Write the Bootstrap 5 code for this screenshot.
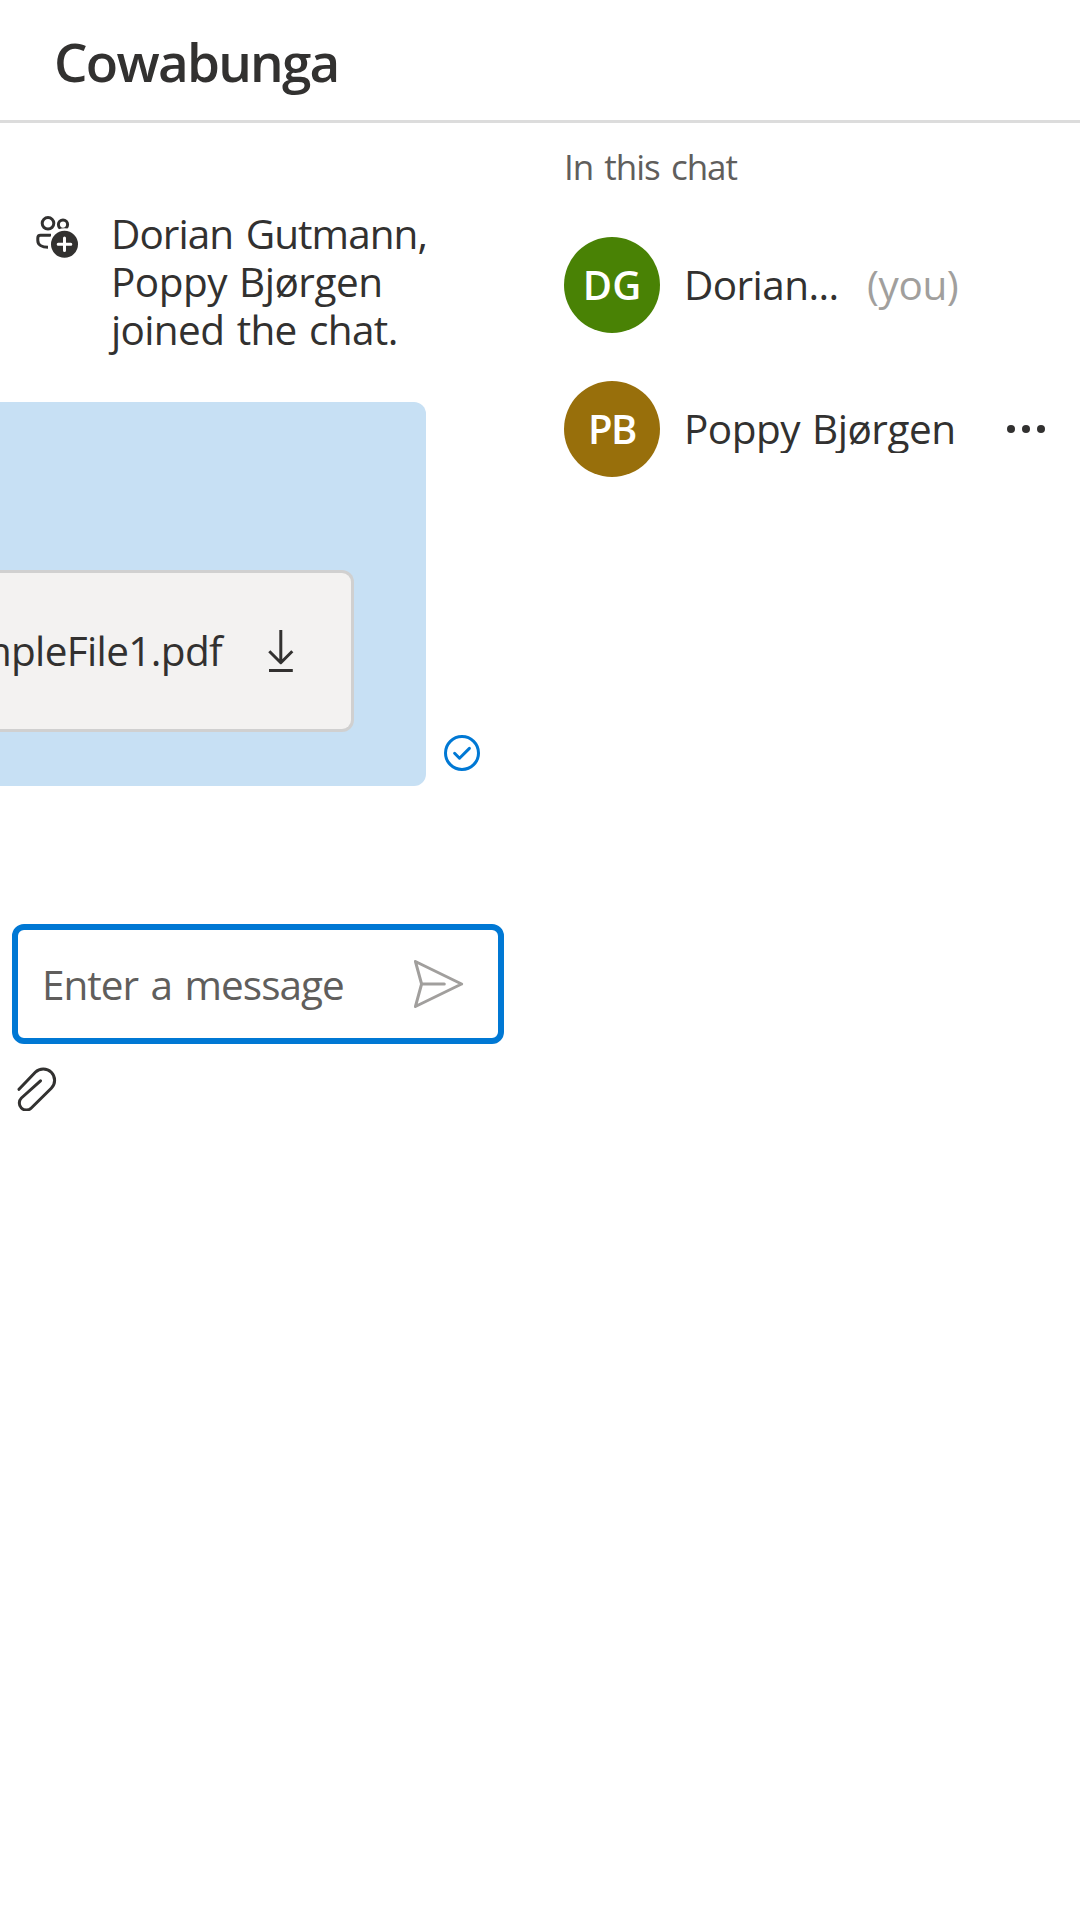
<!DOCTYPE html>
<html lang="en">
<head>
<meta charset="utf-8">
<meta name="viewport" content="width=device-width, initial-scale=1">
<title>Cowabunga</title>
<link href="https://cdn.jsdelivr.net/npm/bootstrap@5.3.0/dist/css/bootstrap.min.css" rel="stylesheet">
<style>
body{font-family:"Open Sans","Noto Sans",sans-serif;font-size:40.5px;line-height:48px;color:#323130;background:#fff;overflow:hidden}
svg{display:block;flex:none;fill:none;stroke:currentColor;stroke-width:3;stroke-linecap:round;stroke-linejoin:round}
.chat-header{height:123px;border-bottom:3px solid #dcdcdc;padding:3px 0 0 54px}
.chat-title{font-size:53px;line-height:72px;font-weight:600;letter-spacing:-1.75px}
.thread{width:528px;padding-top:87px}
.system-note{padding-left:36px;gap:31px}
.note-icon{margin-top:5px}
.line-1{letter-spacing:-.95px;word-spacing:3px}
.line-2{letter-spacing:-.5px;word-spacing:2px}
.line-3{letter-spacing:-.65px;word-spacing:2.5px}
.own-message{margin-top:48px}
.bubble{width:426px;height:384px;padding-top:168px;background:#c7e0f4;border-radius:0 12px 12px 0}
.attachment{width:354px;height:162px;background:#f3f2f1;border:3px solid #d0d0d0;border-left:0;border-radius:0 12px 12px 0;padding-right:49px;gap:38px}
.file-name{letter-spacing:-.65px}
.sent-mark{color:#0078d4;margin:0 0 15px 18px}
.composer{width:492px;height:120px;margin:138px 0 0 12px;border:6px solid #0078d4;border-radius:12px;padding:0 34px 0 24px;background:#fff}
.composer input{font-size:40.5px;line-height:48px;letter-spacing:-1px;word-spacing:3px;color:#605e5c;width:320px;height:60px}
.composer input::placeholder{color:#605e5c;opacity:1}
.send{color:#a19f9d}
.attach{margin:23px 0 0 16px}
.people{padding:22px 0 0 36px}
.people-label{font-size:35px;line-height:44px;letter-spacing:-1px;word-spacing:3px;color:#605e5c}
.person{height:96px;width:492px}
.person-dg{margin-top:48px}
.person-pb{margin-top:48px}
.avatar{width:96px;height:96px;font-weight:600;color:#fff;flex:none;font-size:40px}
.avatar-green{background:#498205}
.avatar-gold{background:#986f0b;letter-spacing:-1.4px}
.person-name{margin-left:24px}
.name-dg{letter-spacing:-.58px;width:183px}
.name-pb{letter-spacing:-.5px;word-spacing:2px;width:312px;overflow:hidden}
.you-tag{color:#a19f9d;letter-spacing:-.4px}
</style>
</head>
<body>
<header class="chat-header d-flex align-items-center">
  <h1 class="chat-title m-0">Cowabunga</h1>
</header>
<main class="d-flex">
  <section class="thread flex-shrink-0">
    <div class="system-note d-flex">
      <svg class="note-icon" width="44" height="44" viewBox="0 0 44 44">
        <circle cx="12" cy="8.3" r="5.8"/><circle cx="27" cy="9.6" r="4.6"/>
        <path d="M15 20.2H4.5Q1.8 20.2 1.8 23V25.5C1.8 30 6 32.3 12 32.3" stroke-linecap="butt"/>
        <circle cx="28.5" cy="29.3" r="16" fill="#fff" stroke="none"/>
        <circle cx="28.5" cy="29.3" r="13.5" fill="currentColor" stroke="none"/>
        <path d="M28.5 23V35.6M22.2 29.3H34.8" stroke="#fff"/>
      </svg>
      <div class="text-nowrap">
        <div class="line-1">Dorian Gutmann,</div>
        <div class="line-2">Poppy Bjørgen</div>
        <div class="line-3">joined the chat.</div>
      </div>
    </div>
    <div class="own-message d-flex align-items-end">
      <div class="bubble">
        <div class="attachment d-flex align-items-center justify-content-end overflow-hidden">
          <span class="file-name text-nowrap">SampleFile1.pdf</span>
          <svg width="42" height="42" viewBox="0 0 42 42"><path stroke-linecap="butt" d="M20.8 0V33M9.3 21.2 20.8 32.7 32.3 21.2M9 40.6H32.8"/></svg>
        </div>
      </div>
      <svg class="sent-mark" width="36" height="36" viewBox="0 0 36 36"><circle cx="18" cy="18" r="16.5"/><path d="M10.6 18.3 15.5 23.2 25.4 13.4"/></svg>
    </div>
    <div class="composer d-flex align-items-center justify-content-between">
      <input class="border-0 p-0 bg-transparent" type="text" placeholder="Enter a message" aria-label="Enter a message">
      <svg class="send" width="50" height="48" viewBox="0 0 50 48"><path d="M1.4 1.5 47.6 24 1.4 46.5 7.6 24ZM7.6 24H30.3"/></svg>
    </div>
    <svg class="attach" width="42" height="44" viewBox="0 0 42 44"><path d="M3 22.3 19.3 5.3A11.3 11.3 0 0 1 35.3 21.3L15.3 41A7 7 0 0 1 5.4 31L24.5 13.8"/></svg>
  </section>
  <aside class="people">
    <div class="people-label">In this chat</div>
    <div class="person person-dg d-flex align-items-center">
      <div class="avatar avatar-green rounded-circle d-flex align-items-center justify-content-center">DG</div>
      <span class="person-name name-dg">Dorian...</span>
      <span class="you-tag">(you)</span>
    </div>
    <div class="person person-pb d-flex align-items-center">
      <div class="avatar avatar-gold rounded-circle d-flex align-items-center justify-content-center">PB</div>
      <span class="person-name name-pb text-nowrap">Poppy Bjørgen</span>
      <svg width="50" height="12" viewBox="0 0 50 12"><g fill="currentColor" stroke="none"><circle cx="15" cy="6" r="4"/><circle cx="30" cy="6" r="4"/><circle cx="45" cy="6" r="4"/></g></svg>
    </div>
  </aside>
</main>
<script src="https://cdn.jsdelivr.net/npm/bootstrap@5.3.0/dist/js/bootstrap.bundle.min.js"></script>
</body>
</html>
